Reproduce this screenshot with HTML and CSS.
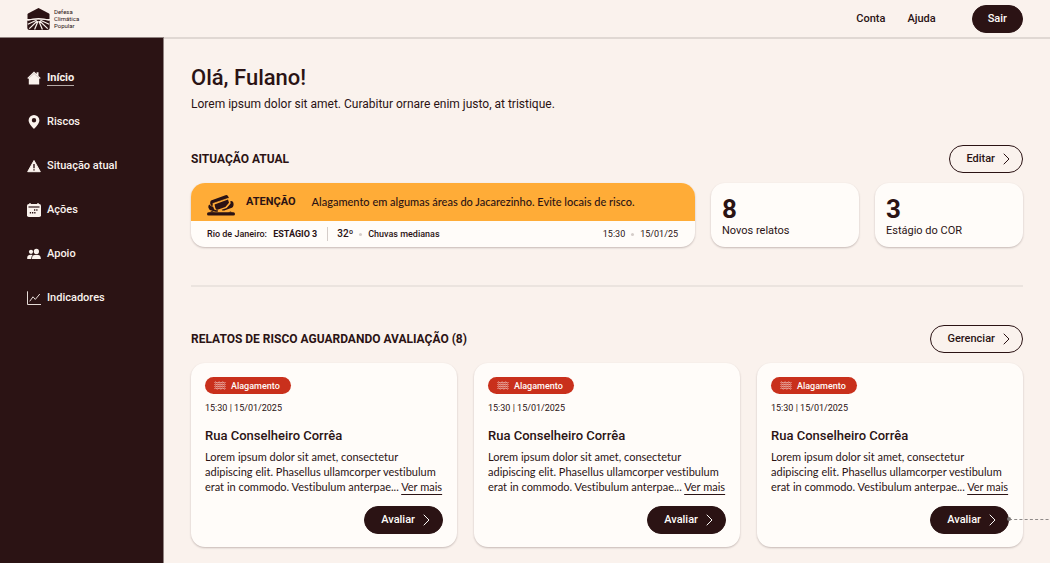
FILE: index.html
```html
<!DOCTYPE html>
<html lang="pt-BR">
<head>
<meta charset="utf-8">
<meta name="viewport" content="width=device-width, initial-scale=1">
<title>Defesa Climática Popular</title>
<link rel="stylesheet" href="styles.css">
</head>
<body>
<svg class="defs" aria-hidden="true">
  <symbol id="chevron" viewBox="0 0 7 12"><path d="M1 1l5 5-5 5" fill="none" stroke="currentColor" stroke-linecap="round" stroke-linejoin="round"/></symbol>
  <symbol id="waves" viewBox="0 0 12 9"><path d="M.5 1.500q1-1 1.830 0t1.830 0 1.830 0 1.830 0 1.830 0 1.830 0M.5 3.500q1-1 1.830 0t1.830 0 1.830 0 1.830 0 1.830 0 1.830 0M.5 5.500q1-1 1.830 0t1.830 0 1.830 0 1.830 0 1.830 0 1.830 0M.5 7.500q1-1 1.830 0t1.830 0 1.830 0 1.830 0 1.830 0 1.830 0" fill="none" stroke="currentColor" stroke-width=".7"/></symbol>
</svg>
<header class="topbar">
  <a class="brand" href="#">
    <svg class="brand-mark" viewBox="0 0 23 22" aria-hidden="true">
      <path d="M11.5 0L22 5.6q.5.3.5.9V11H.5V6.500q0-.6.5-.9z" fill="#2b1314"/>
      <path d="M.3 12.500Q6 11.500 11.500 11.500t11.200 1V19.500q0 2.500-2.500 2.500H2.800Q.3 22 .3 19.500z" fill="#2b1314"/>
      <path d="M.5 12.300Q6 10.600 11.500 10.600t11 1.700" fill="none" stroke="#faf2ed" stroke-width="1.100"/>
      <path d="M9.500 12.200L.8 16.200M10.300 13L2.300 20.600M11 13.200L7.600 21.500M11.900 13.200L15.400 21.500M12.700 13L20.700 20.600M13.500 12.200L22.200 16.200" stroke="#faf2ed" stroke-width="1.200"/>
    </svg>
    <span class="brand-name">Defesa<br>Climática<br>Popular</span>
  </a>
  <nav class="topnav" aria-label="Conta">
    <a href="#">Conta</a>
    <a href="#">Ajuda</a>
    <button class="btn btn-solid btn-exit" type="button">Sair</button>
  </nav>
</header>
<div class="shell">
  <nav class="sidebar" aria-label="Principal">
    <a class="side-link" href="#"><svg class="side-icon" viewBox="0 0 14 14" aria-hidden="true"><path d="M7 .5L.3 7l.9 1L7 2.600 12.800 8l.9-1-2.200-2.100V1.200H9.600v1.800z" fill="currentColor"/><path d="M7 2.400L1.800 7.200v6.300h10.400V7.200z" fill="currentColor"/></svg><span class="side-current">Início</span></a>
    <a class="side-link" href="#"><svg class="side-icon" viewBox="0 0 14 14" aria-hidden="true"><path fill-rule="evenodd" d="M7 0a5.400 5.400 0 0 0-5.400 5.300C1.600 9 7 14 7 14s5.400-5 5.400-8.700A5.400 5.400 0 0 0 7 0zm0 3.100a2.200 2.200 0 1 1 0 4.400 2.200 2.200 0 0 1 0-4.400z" fill="currentColor"/></svg><span>Riscos</span></a>
    <a class="side-link" href="#"><svg class="side-icon" viewBox="0 0 14 14" aria-hidden="true"><path d="M7 1.500L13.300 12.700H.7z" fill="currentColor" stroke="currentColor" stroke-linejoin="round"/><path d="M7 5v4.200M7 10.300v1.300" stroke="#2b1314" stroke-width="1.400"/></svg><span>Situação atual</span></a>
    <a class="side-link" href="#"><svg class="side-icon" viewBox="0 0 14 14" aria-hidden="true"><rect y="1" width="14" height="13" rx="1.800" fill="currentColor"/><path d="M3 0v2M11 0v2" stroke="currentColor" stroke-width="1.300"/><path d="M1.500 4h11" stroke="#2b1314" stroke-width="1.200"/><path d="M7 7h1.300M9.200 7h1.300M2.800 9.800h1.300M5 9.800h1.300M7.200 9.800h1.300" stroke="#2b1314" stroke-width="1.400"/></svg><span>Ações</span></a>
    <a class="side-link" href="#"><svg class="side-icon" viewBox="0 0 14 14" aria-hidden="true"><g fill="currentColor"><circle cx="4" cy="4.800" r="2.100"/><path d="M.2 12V10.800Q.2 7.800 4 7.800q1 0 1.700.3Q4.200 9.300 4.200 12z"/><circle cx="9.400" cy="4.400" r="2.600"/><path d="M5 12v-.8Q5 7.800 9.400 7.800t4.400 3.400V12z"/></g></svg><span>Apoio</span></a>
    <a class="side-link" href="#"><svg class="side-icon" viewBox="0 0 14 14" aria-hidden="true"><path d="M.5.300V13.500H14M2.700 10.300L6 5.800l2.300 2.600L12.800 3" fill="none" stroke="currentColor" stroke-width=".9"/></svg><span>Indicadores</span></a>
  </nav>
  <main class="content">
    <h1 class="greeting">Olá, Fulano!</h1>
    <p class="intro">Lorem ipsum dolor sit amet. Curabitur ornare enim justo, at tristique.</p>

    <section>
      <div class="section-head">
        <h2 class="section-title">SITUAÇÃO ATUAL</h2>
        <button class="btn btn-outline" type="button">Editar <svg class="chevron" aria-hidden="true"><use href="#chevron"/></svg></button>
      </div>
      <div class="status-grid">
        <article class="card status">
          <div class="alert">
            <svg class="alert-icon" viewBox="0 0 28 22" aria-hidden="true">
              <g fill="#2b1314">
                <path d="M4 6.500L18.500 1.200q1.600-.5 2.400.7l1.200 2L6 9.500l-.6 2.700q-1.800-.3-2.200-2.400Q3 7.300 4 6.500z"/>
                <path d="M7.500 10.400L21 5.500l1 3.300-3.600 4.200-8 2.800q-1.600.3-2-1.500z"/>
                <path d="M2.500 10.500Q.8 11.500 1.400 13.800q.8 2.600 3.200 2.800 3 1.800 6.500.8l-.6-1.400q-3 .6-3.700-1.500l-.6-1.700Q3.300 12.600 2.500 10.500z"/>
                <path d="M23.400 7q2.500-.5 3 1.700.8 3.700-1.500 5.100l-7.600 2.700q-2 .4-2.600-.8l5-1.800 3.900-4.300z"/>
                <rect y="18.300" width="28" height="3.200" rx="1.600"/>
                <path d="M2 18.600l3-1.500 3 1.500zM21 18.600l2.500-1.200 2 1.200z"/>
              </g>
              <path d="M5.500 9.700L22.600 3.900M7.500 13.600l.5 2" stroke="#ffac37" stroke-width=".7"/>
            </svg>
            <strong class="alert-level">ATENÇÃO</strong>
            <span class="alert-text">Alagamento em algumas áreas do Jacarezinho. Evite locais de risco.</span>
          </div>
          <div class="weather">
            <span class="stage">Rio de Janeiro: <strong class="stage-level">ESTÁGIO 3</strong></span>
            <span class="temp">32º</span>
            <span class="dot"></span>
            <span>Chuvas medianas</span>
            <time class="clock">15:30</time>
            <span class="dot"></span>
            <time>15/01/25</time>
          </div>
        </article>
        <article class="card stat"><strong class="stat-number">8</strong><span>Novos relatos</span></article>
        <article class="card stat"><strong class="stat-number">3</strong><span>Estágio do COR</span></article>
      </div>
    </section>

    <hr class="divider">

    <section>
      <div class="section-head">
        <h2 class="section-title">RELATOS DE RISCO AGUARDANDO AVALIAÇÃO (8)</h2>
        <button class="btn btn-outline" type="button">Gerenciar <svg class="chevron" aria-hidden="true"><use href="#chevron"/></svg></button>
      </div>
      <div class="report-grid">
        <article class="card report">
          <span class="tag"><svg class="tag-icon" aria-hidden="true"><use href="#waves"/></svg>Alagamento</span>
          <time class="report-date">15:30 | 15/01/2025</time>
          <h3 class="report-title">Rua Conselheiro Corrêa</h3>
          <p class="report-text">Lorem ipsum dolor sit amet, consectetur adipiscing elit. Phasellus ullamcorper vestibulum erat in commodo. Vestibulum anterpae... <a class="more" href="#">Ver mais</a></p>
          <div class="report-action"><button class="btn btn-solid" type="button">Avaliar <svg class="chevron" aria-hidden="true"><use href="#chevron"/></svg></button></div>
        </article>
        <article class="card report">
          <span class="tag"><svg class="tag-icon" aria-hidden="true"><use href="#waves"/></svg>Alagamento</span>
          <time class="report-date">15:30 | 15/01/2025</time>
          <h3 class="report-title">Rua Conselheiro Corrêa</h3>
          <p class="report-text">Lorem ipsum dolor sit amet, consectetur adipiscing elit. Phasellus ullamcorper vestibulum erat in commodo. Vestibulum anterpae... <a class="more" href="#">Ver mais</a></p>
          <div class="report-action"><button class="btn btn-solid" type="button">Avaliar <svg class="chevron" aria-hidden="true"><use href="#chevron"/></svg></button></div>
        </article>
        <article class="card report">
          <span class="tag"><svg class="tag-icon" aria-hidden="true"><use href="#waves"/></svg>Alagamento</span>
          <time class="report-date">15:30 | 15/01/2025</time>
          <h3 class="report-title">Rua Conselheiro Corrêa</h3>
          <p class="report-text">Lorem ipsum dolor sit amet, consectetur adipiscing elit. Phasellus ullamcorper vestibulum erat in commodo. Vestibulum anterpae... <a class="more" href="#">Ver mais</a></p>
          <div class="report-action"><button class="btn btn-solid" type="button">Avaliar <svg class="chevron" aria-hidden="true"><use href="#chevron"/></svg></button><span class="connector"></span></div>
        </article>
      </div>
    </section>
  </main>
</div>
</body>
</html>
```
FILE: styles.css
```css
:root {
  --ink: #2b1314;
  --paper: #faf2ed;
  --card: #fffcf9;
}
* { box-sizing: border-box; }
body {
  margin: 0;
  min-height: 100vh;
  display: flex;
  flex-direction: column;
  background: var(--paper);
  color: var(--ink);
  font: 400 11px/14px Roboto, Inter, sans-serif;
}
h1, h2, h3, p { margin: 0; }
a { color: inherit; text-decoration: none; }
.defs { display: none; }

.topbar {
  display: flex;
  justify-content: space-between;
  align-items: center;
  height: 37px;
  padding: 0 27px;
}
.brand { display: flex; align-items: center; gap: 4px; }
.brand-mark { width: 23px; height: 22px; }
.brand-name { font-size: 6px; line-height: 7px; }
.topnav { display: flex; align-items: center; gap: 22px; font-weight: 500; }

.btn {
  display: inline-flex;
  align-items: center;
  gap: 8px;
  height: 28px;
  padding: 0 12px 0 16px;
  border: 1px solid var(--ink);
  border-radius: 14px;
  font: 500 11px/14px Roboto, Inter, sans-serif;
  color: var(--ink);
  cursor: pointer;
}
.btn-solid { background: var(--ink); color: var(--card); }
.btn-outline { background: transparent; }
.btn-exit { padding: 0 15px; margin-left: 14px; }
.chevron { width: 7px; height: 12px; }

.shell { flex: 1; display: flex; }
.sidebar {
  flex: 0 0 164px;
  display: flex;
  flex-direction: column;
  gap: 26px;
  padding: 31px 27px;
  background: var(--ink);
  color: var(--paper);
  border-top: 1px solid #8f8280;
  border-right: 1px solid #8f8280;
}
.side-link { display: flex; align-items: center; gap: 6px; height: 18px; font-weight: 500; }
.side-icon { width: 14px; height: 14px; }
.side-current { font-weight: 700; border-bottom: 1px solid #b5a9a6; }

.content {
  flex: 1;
  min-width: 0;
  padding: 25px 27px 16px;
  border-top: 2px solid #e0d8d3;
  overflow-x: clip;
}
.greeting { font-size: 22px; line-height: 28px; font-weight: 500; }
.intro { margin: 4px 0 32px; font-size: 12px; line-height: 17px; }
.section-head {
  display: flex;
  justify-content: space-between;
  align-items: center;
  margin-bottom: 10px;
}
.section-title { font-size: 12px; line-height: 16px; font-weight: 700; }
.card {
  background: var(--card);
  border-radius: 14px;
  box-shadow: 0 1px 2px #2b131440;
}
.status-grid { display: grid; grid-template-columns: 504fr 148fr 148fr; gap: 16px; }
.status { overflow: hidden; font-size: 9px; font-weight: 500; }
.alert {
  display: flex;
  align-items: center;
  height: 38px;
  padding: 0 16px;
  background: #ffac37;
  font-size: 11px;
}
.alert-icon { width: 28px; height: 22px; margin: 6px 11px 0 0; }
.alert-level { margin-right: 16px; font-weight: 700; }
.alert-text { font-family: Lato, Roboto, sans-serif; font-variant-ligatures: none; }
.weather { display: flex; align-items: center; height: 26px; padding: 0 17px 0 16px; }
.stage { padding-right: 10px; margin-right: 9px; border-right: 1px solid #d5cdc9; }
.stage-level { margin-left: 4px; }
.temp { font-size: 10px; }
.dot { flex: none; width: 3px; height: 3px; margin: 0 6px; border-radius: 50%; background: #d5cdc9; }
.clock { margin-left: auto; }
.weather time { font-weight: 400; }
.stat { display: flex; flex-direction: column; padding: 11px 11px 9px; }
.stat-number { font-size: 26px; line-height: 30px; font-weight: 700; }

.divider { margin: 38px 0; border: 0; border-top: 2px solid #ebe4df; }

.report-grid { display: grid; grid-template-columns: repeat(3, 1fr); gap: 17px; }
.report { padding: 14px 14px 13px; }
.tag {
  display: flex;
  align-items: center;
  gap: 5px;
  width: max-content;
  height: 17px;
  padding: 0 11px 0 9px;
  border-radius: 9px;
  background: #c9301c;
  color: var(--card);
  font-size: 9px;
  font-weight: 500;
}
.tag-icon { width: 12px; height: 9px; }
.report-date { display: block; margin-top: 7px; font-size: 9px; }
.report-title { margin: 11px 0 3px; font-size: 13px; line-height: 20px; font-weight: 500; }
.report-text {
  margin-right: -2px;
  font-family: Lato, Roboto, sans-serif;
  font-variant-ligatures: none;
  line-height: 15px;
}
.more { text-decoration: underline; text-underline-offset: 3px; }
.report-action { position: relative; display: flex; justify-content: flex-end; margin-top: 12px; }
.connector {
  position: absolute;
  top: 13px;
  left: 100%;
  width: 50px;
  border-top: 1px dashed #8f8a88;
}
.connector::before {
  content: "";
  position: absolute;
  top: -3px;
  left: -2px;
  width: 4px;
  height: 4px;
  border-radius: 50%;
  background: #7c7674;
}
```
